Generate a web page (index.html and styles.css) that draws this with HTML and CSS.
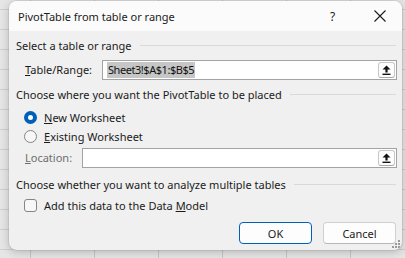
FILE: index.html
```html
<!DOCTYPE html>
<html lang="en">
<head>
    <meta charset="UTF-8">
    <meta name="viewport" content="width=device-width, initial-scale=1.0">
    <title>PivotTable from table or range</title>
    <link rel="stylesheet" href="styles.css">
</head>
<body>
    <div class="dialog">
        <div class="titlebar">
            <span class="title">PivotTable from table or range</span>
            <span class="help">?</span>
            <span class="close">
                <svg width="12" height="12" viewBox="0 0 12 12"><path d="M0.5 0.5 L11.5 11.5 M11.5 0.5 L0.5 11.5" stroke="#1b1b1b" stroke-width="1.1" fill="none"/></svg>
            </span>
        </div>
        <div class="content">
            <div class="section-title"><span>Select a table or range</span></div>
            <div class="field-row">
                <label class="field-label range-label"><u>T</u>able/Range:</label>
                <div class="input">
                    <span class="selected">Sheet3!$A$1:$B$5</span>
                    <button class="pick">
                        <svg width="9" height="10" viewBox="0 0 9 10"><path d="M4.5 0.5 L8.5 4.5 L5.6 4.5 L5.6 7.5 L3.4 7.5 L3.4 4.5 L0.5 4.5 Z" fill="#111"/><rect x="0.5" y="8.6" width="8" height="1.4" fill="#111"/></svg>
                    </button>
                </div>
            </div>

            <div class="section-title spaced"><span>Choose where you want the PivotTable to be placed</span></div>
            <div class="option first">
                <span class="radio checked"></span>
                <span><u>N</u>ew Worksheet</span>
            </div>
            <div class="option">
                <span class="radio"></span>
                <span><u>E</u>xisting Worksheet</span>
            </div>
            <div class="field-row location">
                <label class="field-label disabled loc-label"><u>L</u>ocation:</label>
                <div class="input">
                    <button class="pick">
                        <svg width="9" height="10" viewBox="0 0 9 10"><path d="M4.5 0.5 L8.5 4.5 L5.6 4.5 L5.6 7.5 L3.4 7.5 L3.4 4.5 L0.5 4.5 Z" fill="#111"/><rect x="0.5" y="8.6" width="8" height="1.4" fill="#111"/></svg>
                    </button>
                </div>
            </div>

            <div class="section-title third"><span>Choose whether you want to analyze multiple tables</span></div>
            <div class="option check-row">
                <span class="checkbox"></span>
                <span>Add this data to the Data <u>M</u>odel</span>
            </div>

            <div class="actions">
                <button class="btn default">OK</button>
                <button class="btn">Cancel</button>
            </div>
        </div>
        <div class="grip">
            <svg width="8" height="8" viewBox="0 0 8 8" fill="#9a9a9a">
                <rect x="6" y="0" width="2" height="2"/>
                <rect x="3" y="3" width="2" height="2"/><rect x="6" y="3" width="2" height="2"/>
                <rect x="0" y="6" width="2" height="2"/><rect x="3" y="6" width="2" height="2"/><rect x="6" y="6" width="2" height="2"/>
            </svg>
        </div>
    </div>
</body>
</html>
```

FILE: styles.css
```css
body {
    margin: 0;
    height: 258px;
    overflow: hidden;
    background-color: #e6e6e6;
    background-image:
        linear-gradient(to bottom, transparent 9px, #cfcfcf 9px, #cfcfcf 10px, transparent 10px),
        linear-gradient(to right, transparent 30px, #c9c9c9 30px, #c9c9c9 31px, transparent 31px);
    background-size: 100% 20px, 64px 100%;
    background-position: 0 0, 0 0;
    font-family: "Noto Sans", "Open Sans", sans-serif;
    font-size: 11px;
    color: #1b1b1b;
}
.dialog {
    position: relative;
    width: 393px;
    height: 249px;
    margin: 1px 0 0 9px;
    background: #f0f0f0;
    border-radius: 8px;
    box-shadow: 0 2px 10px rgba(0, 0, 0, 0.22), 0 0 0 1px rgba(0, 0, 0, 0.06);
    overflow: hidden;
}
.titlebar {
    height: 30px;
    background: #fbfbfb;
    display: flex;
    align-items: center;
    padding-left: 9px;
}
.title {
    flex: 1;
    font-size: 11px;
}
.help {
    width: 10px;
    font-size: 12px;
    margin-right: 34px;
}
.close {
    display: flex;
    width: 12px;
    margin-right: 16px;
}
.content {
    padding: 6px 5px 0 7px;
}
.section-title {
    display: flex;
    align-items: center;
    height: 16px;
}
.section-title::after {
    content: "";
    flex: 1;
    height: 1px;
    background: #d9d9d9;
    margin: 0 1px 0 8px;
}
.section-title.spaced {
    margin-top: 6px;
}
.section-title.third {
    margin-top: 8px;
}
.field-row {
    display: flex;
    align-items: center;
    height: 20px;
    margin-top: 7px;
    padding-left: 9px;
}
.field-row.location {
    margin-top: 2px;
}
.field-label {
    line-height: 20px;
}
.range-label {
    width: 77px;
}
.loc-label {
    width: 57px;
}
.disabled {
    color: #6e6e6e;
}
.input {
    flex: 1;
    height: 20px;
    box-sizing: border-box;
    background: #fff;
    border: 1px solid #a3a3a3;
    display: flex;
    align-items: center;
    padding-left: 4px;
}
.selected {
    flex: none;
    background: #c6c6c6;
    color: #111;
    line-height: 16px;
    padding: 0 1px;
    letter-spacing: -0.45px;
}
.pick {
    margin-left: auto;
    margin-right: 1px;
    width: 17px;
    height: 16px;
    padding: 0;
    box-sizing: border-box;
    border: 1px solid #c8c8c8;
    border-bottom-color: #a8a8a8;
    border-radius: 3px;
    background: #fdfdfd;
    display: flex;
    align-items: center;
    justify-content: center;
}
.option {
    display: flex;
    align-items: center;
    height: 19px;
    padding-left: 8px;
}
.option.first {
    margin-top: 6px;
}
.radio {
    width: 13px;
    height: 13px;
    box-sizing: border-box;
    border-radius: 50%;
    border: 1px solid #858585;
    background: #f7f7f7;
    margin-right: 7px;
}
.radio.checked {
    border: 4px solid #005fb8;
    background: #fff;
}
.check-row {
    margin-top: 4px;
    height: 18px;
}
.checkbox {
    width: 13px;
    height: 13px;
    box-sizing: border-box;
    border: 1px solid #858585;
    border-radius: 3px;
    background: #f7f7f7;
    margin-right: 7px;
}
.actions {
    display: flex;
    justify-content: flex-end;
    gap: 11px;
    margin-top: 8px;
    padding-right: 1px;
}
.btn {
    width: 73px;
    height: 22px;
    box-sizing: border-box;
    font-family: inherit;
    font-size: 11px;
    color: #1b1b1b;
    background: #fdfdfd;
    border: 1px solid #d0d0d0;
    border-bottom-color: #b8b8b8;
    border-radius: 4px;
    padding: 0;
}
.btn.default {
    border: 1px solid #005fb8;
}
.grip {
    position: absolute;
    right: 2px;
    bottom: 2px;
    display: flex;
}
```
